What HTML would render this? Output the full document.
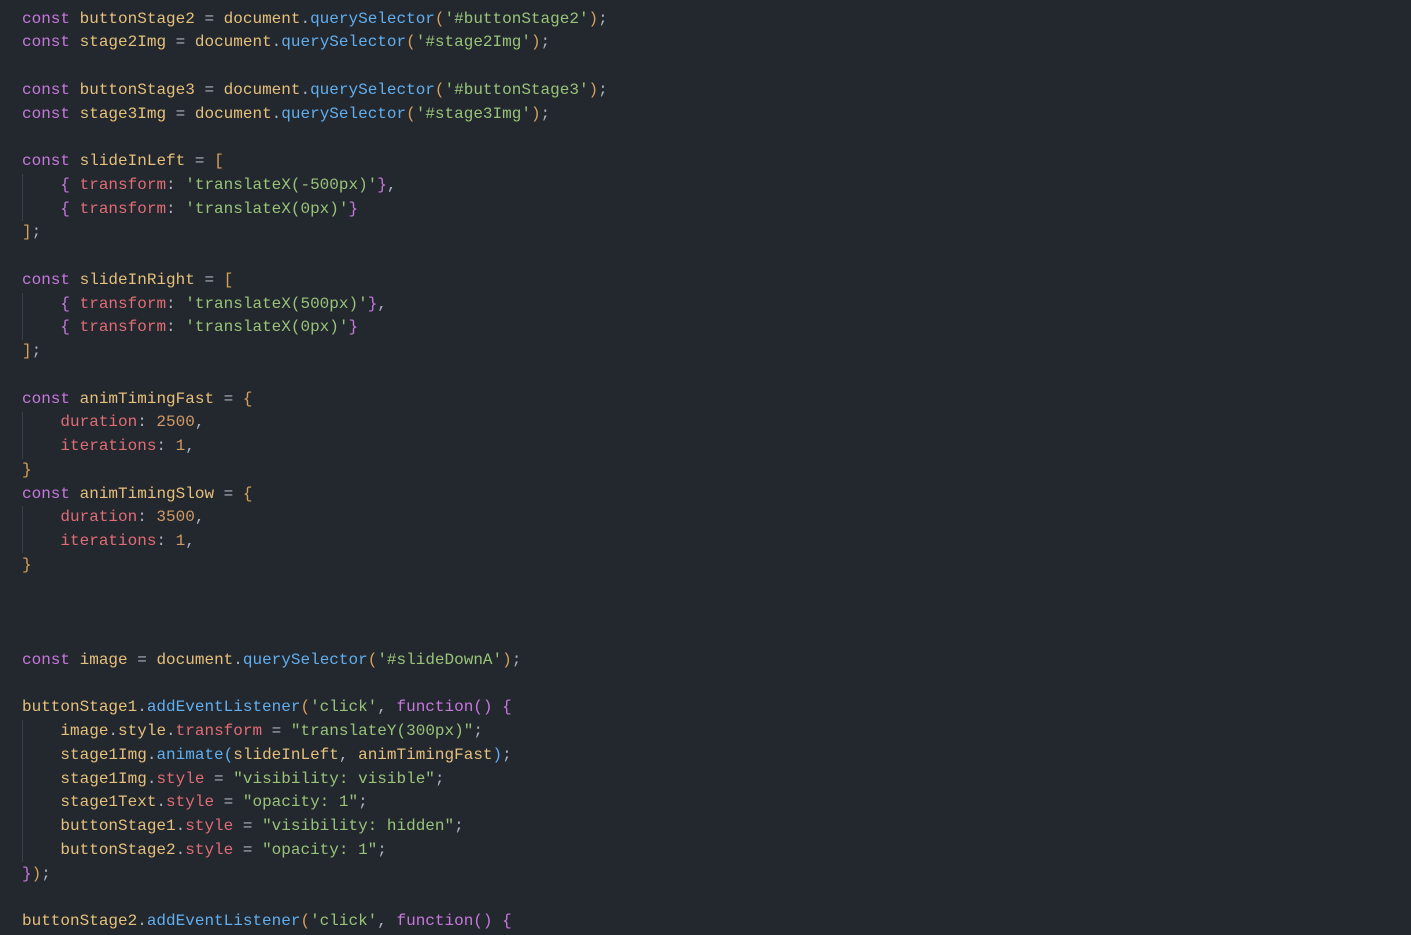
<!DOCTYPE html>
<html><head><meta charset="utf-8"><style>
html,body{margin:0;padding:0;background:#23272e;width:1411px;height:935px;overflow:hidden}
pre{margin:0;padding:7.5px 0 0 22px;font-family:"Liberation Mono",monospace;font-size:16px;line-height:23.75px;color:#abb2bf;position:relative}
.k{color:#c678dd}.v{color:#e5c07b}.f{color:#61afef}.s{color:#98c379}.p{color:#e06c75}.n{color:#d19a66}.b1{color:#d7a05c}.b2{color:#c678dd}.w{color:#abb2bf}
.g{position:absolute;left:22px;width:1px;background:#3b4048}
</style></head><body>
<pre><div class="g" style="top:174px;height:47px"></div><div class="g" style="top:293px;height:47px"></div><div class="g" style="top:412px;height:47px"></div><div class="g" style="top:506px;height:47px"></div><div class="g" style="top:720px;height:142px"></div><span class="k">const</span> <span class="v">buttonStage2</span> = <span class="v">document</span>.<span class="f">querySelector</span><span class="b1">(</span><span class="s">'#buttonStage2'</span><span class="b1">)</span>;
<span class="k">const</span> <span class="v">stage2Img</span> = <span class="v">document</span>.<span class="f">querySelector</span><span class="b1">(</span><span class="s">'#stage2Img'</span><span class="b1">)</span>;

<span class="k">const</span> <span class="v">buttonStage3</span> = <span class="v">document</span>.<span class="f">querySelector</span><span class="b1">(</span><span class="s">'#buttonStage3'</span><span class="b1">)</span>;
<span class="k">const</span> <span class="v">stage3Img</span> = <span class="v">document</span>.<span class="f">querySelector</span><span class="b1">(</span><span class="s">'#stage3Img'</span><span class="b1">)</span>;

<span class="k">const</span> <span class="v">slideInLeft</span> = <span class="b1">[</span>
    <span class="b2">{</span> <span class="p">transform</span>: <span class="s">'translateX(-500px)'</span><span class="b2">}</span>,
    <span class="b2">{</span> <span class="p">transform</span>: <span class="s">'translateX(0px)'</span><span class="b2">}</span>
<span class="b1">]</span>;

<span class="k">const</span> <span class="v">slideInRight</span> = <span class="b1">[</span>
    <span class="b2">{</span> <span class="p">transform</span>: <span class="s">'translateX(500px)'</span><span class="b2">}</span>,
    <span class="b2">{</span> <span class="p">transform</span>: <span class="s">'translateX(0px)'</span><span class="b2">}</span>
<span class="b1">]</span>;

<span class="k">const</span> <span class="v">animTimingFast</span> = <span class="b1">{</span>
    <span class="p">duration</span>: <span class="n">2500</span>,
    <span class="p">iterations</span>: <span class="n">1</span>,
<span class="b1">}</span>
<span class="k">const</span> <span class="v">animTimingSlow</span> = <span class="b1">{</span>
    <span class="p">duration</span>: <span class="n">3500</span>,
    <span class="p">iterations</span>: <span class="n">1</span>,
<span class="b1">}</span>



<span class="k">const</span> <span class="v">image</span> = <span class="v">document</span>.<span class="f">querySelector</span><span class="b1">(</span><span class="s">'#slideDownA'</span><span class="b1">)</span>;

<span class="v">buttonStage1</span>.<span class="f">addEventListener</span><span class="b1">(</span><span class="s">'click'</span>, <span class="k">function</span><span class="b2">()</span> <span class="b2">{</span>
    <span class="v">image</span>.<span class="v">style</span>.<span class="p">transform</span> = <span class="s">"translateY(300px)"</span>;
    <span class="v">stage1Img</span>.<span class="f">animate</span><span class="f">(</span><span class="v">slideInLeft</span>, <span class="v">animTimingFast</span><span class="f">)</span>;
    <span class="v">stage1Img</span>.<span class="p">style</span> = <span class="s">"visibility: visible"</span>;
    <span class="v">stage1Text</span>.<span class="p">style</span> = <span class="s">"opacity: 1"</span>;
    <span class="v">buttonStage1</span>.<span class="p">style</span> = <span class="s">"visibility: hidden"</span>;
    <span class="v">buttonStage2</span>.<span class="p">style</span> = <span class="s">"opacity: 1"</span>;
<span class="b2">}</span><span class="b1">)</span>;

<span class="v">buttonStage2</span>.<span class="f">addEventListener</span><span class="b1">(</span><span class="s">'click'</span>, <span class="k">function</span><span class="b2">()</span> <span class="b2">{</span>
</pre>
</body></html>
